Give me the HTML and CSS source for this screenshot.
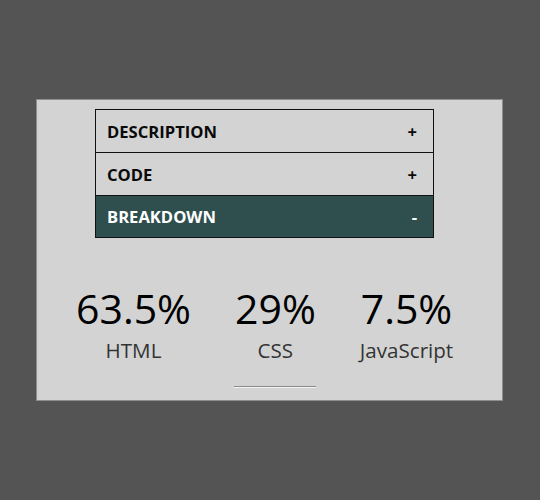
FILE: index.html
```html
<!DOCTYPE html>
<html>
<head>
<meta charset="utf-8">
<link rel="stylesheet" href="styles.css">
</head>
<body>
<div class="card">
  <div class="accordion">
    <div class="row"><span>DESCRIPTION</span><span>+</span></div>
    <div class="row"><span>CODE</span><span>+</span></div>
    <div class="row active"><span>BREAKDOWN</span><span>-</span></div>
  </div>
  <div class="stats">
    <div class="stat"><div class="num">63.5%</div><div class="label">HTML</div></div>
    <div class="stat"><div class="num">29%</div><div class="label">CSS</div></div>
    <div class="stat"><div class="num">7.5%</div><div class="label">JavaScript</div></div>
  </div>
  <div class="rule"></div>
</div>
</body>
</html>
```
FILE: styles.css
```css
html, body {
  margin: 0;
  padding: 0;
}
body {
  background: #545454;
  height: 500px;
  font-family: "Open Sans", sans-serif;
  overflow: hidden;
}
.card {
  margin: 99px 0 0 36px;
  width: 465px;
  height: 300px;
  background: #d3d3d3;
  border: 1px solid #8e8e8e;
  display: flex;
  flex-direction: column;
}
.accordion {
  margin: 9px 0 0 58px;
  width: 337px;
  border: 1px solid #111;
}
.row {
  height: 42px;
  display: flex;
  align-items: center;
  justify-content: space-between;
  padding: 0 16px 0 11px;
  font-weight: 700;
  font-size: 16.6px;
  color: #0a0a0a;
}
.row + .row {
  border-top: 1px solid #111;
}
.row.active {
  height: 41px;
  background: #2f4f4f;
  color: #fff;
}
.stats {
  display: flex;
  gap: 44px;
  margin: 42px 0 0 39px;
}
.stat {
  display: flex;
  flex-direction: column;
  align-items: center;
}
.num {
  font-size: 41px;
  line-height: 57px;
  color: #000;
}
.label {
  font-size: 20.6px;
  line-height: 27px;
  color: #333;
}
.rule {
  align-self: flex-start;
  margin: 22px 0 0 197px;
  width: 82px;
  height: 0;
  border-top: 1px solid #8a8a8a;
  border-bottom: 1px solid #f4f4f4;
}
```
